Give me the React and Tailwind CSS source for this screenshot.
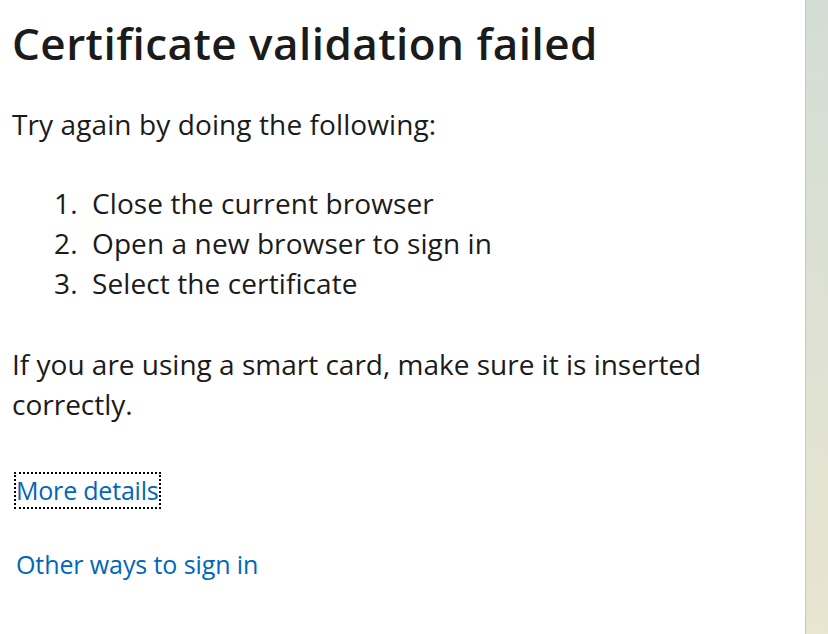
import React from "react";

const steps = [
  "Close the current browser",
  "Open a new browser to sign in",
  "Select the certificate",
];

const App = () => {
  return (
    <div
      className="flex h-[634px] w-[828px] overflow-hidden bg-white text-[#1b1b1b]"
      style={{ fontFamily: '"Open Sans", "Noto Sans", sans-serif' }}
    >
      {/* Main panel */}
      <main className="flex-1 pl-3 pt-[17px]">
        <h1 className="text-[44px] font-semibold leading-[52px] tracking-[0.45px]">
          Certificate validation failed
        </h1>

        <p className="mt-[35px] text-[28px] leading-[40px] tracking-[0.1px]">
          Try again by doing the following:
        </p>

        <ol className="mt-[39px] text-[28px] leading-[40px] tracking-[0.1px]">
          {steps.map((step, i) => (
            <li key={i} className="flex">
              <span className="w-[80px] pl-[42px]">{i + 1}.</span>
              <span>{step}</span>
            </li>
          ))}
        </ol>

        <p className="mt-[41px] text-[28px] leading-[40px] tracking-[0px]">
          If you are using a smart card, make sure it is inserted
          <br />
          correctly.
        </p>

        {/* Links */}
        <div className="mt-[48px] flex flex-col items-start text-[25px] text-[#0067b8]">
          <a
            href="#"
            className="ml-[2px] border-2 border-dotted border-black leading-[33px] tracking-[-0.2px]"
          >
            More details
          </a>
          <a href="#" className="ml-[4px] mt-[39px] leading-[33px] tracking-[-0.1px]">
            Other ways to sign in
          </a>
        </div>
      </main>

      {/* Background edge */}
      <div className="w-[23px] border-l border-[#c4cac3] bg-gradient-to-b from-[#d3ddd5] to-[#e8e5d0]" />
    </div>
  );
};

export default App;
